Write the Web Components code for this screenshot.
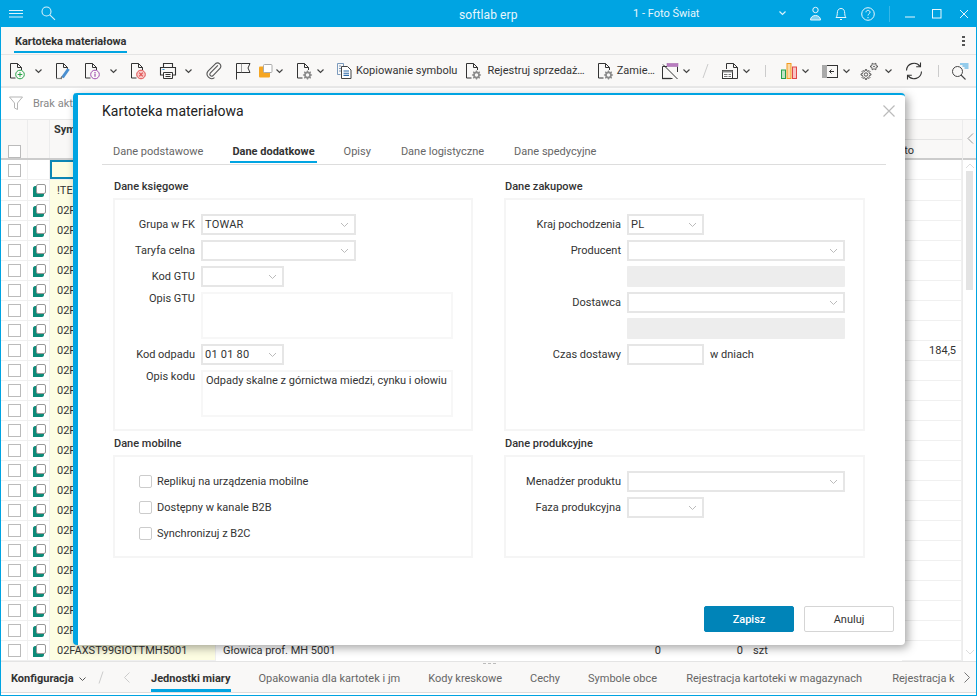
<!DOCTYPE html>
<html lang="pl">
<head>
<meta charset="utf-8">
<title>softlab erp</title>
<style>
  html, body { margin: 0; height: 100%; overflow: hidden; }
  body { font: 11px Roboto, "Liberation Sans", sans-serif; color: #333; }
</style>
</head>
<body>
<erp-app>
  <title-bar slot="title"></title-bar>
  <doc-tabs slot="tabs"></doc-tabs>
  <tool-bar slot="tools"></tool-bar>
  <filter-row slot="filter"></filter-row>
  <data-grid slot="grid"></data-grid>
  <bottom-tabs slot="bottom"></bottom-tabs>
  <material-dialog slot="dialog">
    <form-section slot="left" title="Dane księgowe" height="233" label="80">
      <form-field label="Grupa w FK"><combo-box width="155" value="TOWAR"></combo-box></form-field>
      <form-field label="Taryfa celna"><combo-box width="155"></combo-box></form-field>
      <form-field label="Kod GTU"><combo-box width="83"></combo-box></form-field>
      <form-field label="Opis GTU" top><memo-box height="47"></memo-box></form-field>
      <form-field label="Kod odpadu"><combo-box width="83" value="01 01 80"></combo-box></form-field>
      <form-field label="Opis kodu" top><memo-box height="47">Odpady skalne z górnictwa miedzi, cynku i ołowiu</memo-box></form-field>
    </form-section>
    <form-section slot="left" title="Dane mobilne" height="103" label="80">
      <check-field>Replikuj na urządzenia mobilne</check-field>
      <check-field>Dostępny w kanale B2B</check-field>
      <check-field>Synchronizuj z B2C</check-field>
    </form-section>
    <form-section slot="right" title="Dane zakupowe" height="233" label="115">
      <form-field label="Kraj pochodzenia"><combo-box width="77" value="PL"></combo-box></form-field>
      <form-field label="Producent"><combo-box width="218"></combo-box></form-field>
      <form-field label=""><grey-box></grey-box></form-field>
      <form-field label="Dostawca"><combo-box width="218"></combo-box></form-field>
      <form-field label=""><grey-box></grey-box></form-field>
      <form-field label="Czas dostawy"><combo-box width="77" plain></combo-box><span style="margin-left:6px">w dniach</span></form-field>
    </form-section>
    <form-section slot="right" title="Dane produkcyjne" height="103" label="115">
      <form-field label="Menadżer produktu"><combo-box width="218"></combo-box></form-field>
      <form-field label="Faza produkcyjna"><combo-box width="77"></combo-box></form-field>
    </form-section>
  </material-dialog>
</erp-app>

<script>
  const chev = (color = "#555", w = 9) =>
    `<svg width="${w}" height="6" viewBox="0 0 9 6"><path d="M1.500 1.500l3 3 3-3" fill="none" stroke="${color}" stroke-width="1.200"/></svg>`;

  // outline of a cog wheel, used by the gear icons
  const cog = (cx, cy, R, r, teeth) => {
    const pts = [];
    for (let i = 0; i < teeth; i++) {
      const step = (Math.PI * 2) / teeth;
      const a = i * step;
      [[r, -0.30], [R, -0.16], [R, 0.16], [r, 0.30]].forEach(([rad, off]) => {
        const t = a + off * step;
        pts.push((cx + rad * Math.cos(t)).toFixed(2) + " " + (cy + rad * Math.sin(t)).toFixed(2));
      });
    }
    return "M" + pts.join("L") + "z";
  };

  // toolbar icons, all on a 18x18 box
  const doc = `<path d="M1.500 16V1.500h7l4 4v2.500M8.500 1.500v4h4M1.500 16h5" fill="none" stroke="#333"/>`;
  const docGear = `<path d="M1.500 16V1.500h7l4 4v2.500M8.500 1.500v4h4M1.500 16h5" fill="none" stroke="#333"/><path d="${cog(11.5, 13, 4.6, 3.5, 8)}" fill="#8a8a8a"/><circle cx="11.500" cy="13" r="1.700" fill="#f9f8f7"/>`;
  const ICONS = {
    add: doc + `<circle cx="11" cy="12.500" r="4.300" fill="#f9f8f7" stroke="#2aa54a"/><path d="M8.700 12.500h4.600M11 10.200v4.600" stroke="#2aa54a"/>`,
    edit: `<path d="M1.500 16V1.500h7l4 4v2M8.500 1.500v4h4" fill="none" stroke="#333"/><path d="M1 16.500h6" stroke="#888" stroke-width="1.200"/><path d="M7.500 15.500l6-8.500" stroke="#4a8fd0" stroke-width="3"/><path d="M5.800 17l1.200-2.500" stroke="#777" stroke-width="1.500"/>`,
    info: doc + `<circle cx="11" cy="12.500" r="4.300" fill="#f9f8f7" stroke="#a050b0"/><path d="M11 11.500v3.300M11 9.900v1" stroke="#a050b0" stroke-width="1.200"/>`,
    del: doc + `<circle cx="11" cy="12.500" r="4.300" fill="#f8c8c8" stroke="#e05050"/><path d="M9.200 10.700l3.600 3.600M12.800 10.700l-3.600 3.600" stroke="#e05050" stroke-width="1.100"/>`,
    print: `<path d="M4.500 5V1.500h9V5M4.500 13h-3V5.500h15V13h-3" fill="none" stroke="#333" stroke-width="1.100"/><path d="M4.500 10.500h9v6h-9zM6.500 12.500h5M6.500 14.500h5" fill="none" stroke="#333"/><path d="M3.500 7.500h2" stroke="#2f8fd0"/>`,
    clip: `<path d="M13.500 4.500L5.200 13a2 2 0 0 0 2.800 2.800l8-8.300a3.600 3.600 0 0 0-5-5L2.800 10.800a5 5 0 0 0 7 7" transform="scale(.92) translate(.5 -.8)" fill="none" stroke="#555" stroke-width="1.200"/>`,
    flag: `<path d="M1.500 17.500V1.500h13.500l-2 4.500 2 4.500H1.500" fill="none" stroke="#333"/><path d="M6.500 1.500v9" stroke="#777" stroke-width=".7"/>`,
    square: `<rect x="1" y="4.500" width="11" height="11" rx="1" fill="#f5a623"/><rect x="5.500" y="2.500" width="8.500" height="8" rx="1" fill="#fff" stroke="#aaa"/>`,
    docgear: docGear,
    copy: `<path d="M1.500 1.500h6v3M1.500 1.500v11h3M3 4h2M3 6.500h2M3 9h2" fill="none" stroke="#6d90b5" stroke-width=".9"/><path d="M5.500 4.500h6l3.500 3.500v8.500H5.500z" fill="#fff" stroke="#444"/><path d="M7.500 9h5.500M7.500 11.200h5.500M7.500 13.400h5.500" stroke="#2c6aa8" stroke-width="1.100"/>`,
    tag: `<path d="M1.500 4.500v12h10M16.500 10v-5.500" fill="none" stroke="#333"/><path d="M1.500 4.500H6" stroke="#333"/><rect x="6" y="1.500" width="11" height="3" fill="#b87cc0" stroke="#a060a8" stroke-width=".5"/><path d="M2 2.500l14.500 14.500" stroke="#333"/><path d="M1 16.500h9" stroke="#333" stroke-width="1.300"/>`,
    slash: `<path d="M5 16L10 2" stroke="#ccc"/>`,
    doctable: `<path d="M5.500 7V1.500h7l4 4v11h-5M12.500 1.500v4h4" fill="none" stroke="#333"/><rect x="1.500" y="8.500" width="10" height="8" fill="#fff" stroke="#333"/><rect x="1.500" y="8.500" width="10" height="2" fill="#888"/><path d="M3 12.500h3.500M7.500 12.500h2.500M3 14.500h3.500M7.500 14.500h2.500" stroke="#666" stroke-width=".9"/>`,
    bars: `<rect x="1.500" y="8" width="4" height="8.500" fill="#bfe3c5" stroke="#25a04a"/><rect x="7" y="1.500" width="4" height="15" fill="#fbd9a5" stroke="#f39a1e"/><rect x="12.500" y="5" width="4" height="11.500" fill="#f8c4c4" stroke="#e04848"/>`,
    panel: `<rect x="1.500" y="3.500" width="15" height="12" fill="none" stroke="#333"/><rect x="1" y="3" width="5" height="13" fill="#aaa"/><path d="M13 9.500H8.500M10.500 7.500l-2 2 2 2" fill="none" stroke="#333"/>`,
    gears: `<path d="${cog(6, 12.5, 5, 3.6, 8)}" fill="none" stroke="#444" stroke-width=".9"/><circle cx="6" cy="12.500" r="1.700" fill="none" stroke="#444" stroke-width=".9"/><path d="${cog(14, 4.5, 3.5, 2.4, 6)}" fill="none" stroke="#444" stroke-width=".9"/><circle cx="14" cy="4.500" r=".8" fill="#444"/>`,
    refresh: `<path d="M1.500 8.500a7.500 7.500 0 0 1 13.500-4.200M16.500 9.500a7.500 7.500 0 0 1-13.500 4.200" fill="none" stroke="#333" stroke-width="1.100"/><path d="M15.500 .5v4.300h-4.300M2.500 17.500v-4.300h4.300" fill="none" stroke="#333" stroke-width="1.100"/>`,
    find: `<circle cx="5.500" cy="9.500" r="5" fill="none" stroke="#444"/><path d="M9 13l4.500 4.500" stroke="#444" stroke-width="1.100"/><path d="M8 2h8.500M10.500 4h6M12.500 6h4" stroke="#2f9fe0"/>`
  };

  class ErpApp extends HTMLElement {
    constructor() {
      super();
      this.attachShadow({ mode: "open" }).innerHTML = `
      <style>
        :host { display: flex; flex-direction: column; position: relative; box-sizing: border-box;
          width: 977px; height: 696px; background: #fff; border: solid #00a4e2; border-width: 0 1px 1px; overflow: hidden; }
        ::slotted([slot="grid"]) { flex: 1; min-height: 0; }
      </style>
      <slot name="title"></slot>
      <slot name="tabs"></slot>
      <slot name="tools"></slot>
      <slot name="filter"></slot>
      <slot name="grid"></slot>
      <slot name="bottom"></slot>
      <slot name="dialog"></slot>`;
    }
  }

  class TitleBar extends HTMLElement {
    constructor() {
      super();
      this.attachShadow({ mode: "open" }).innerHTML = `
      <style>
        :host { display: grid; grid-template-columns: 35px 32px 1fr; height: 27px; margin: 0 -1px; background: #00a4e2; color: #fff; align-items: center; position: relative; }
        .name { position: absolute; left: 459px; top: 8px; font-size: 12px; color: #e8f6fc; letter-spacing: .1px; }
        .right { display: flex; align-items: center; height: 27px; }
        .firm { margin-left: 566px; font-size: 11px; width: 145px; margin-top: -1px; color: #e8f6fc; }
        svg { display: block; flex: none; }
      </style>
      <svg style="margin-left:9px" width="15" height="10" viewBox="0 0 15 10"><path d="M0 1.500h14M0 4.500h14M0 8h14" stroke="#dff3fb"/></svg>
      <svg style="margin-left:6px;margin-top:-1px" width="15" height="15" viewBox="0 0 15 15"><circle cx="5.500" cy="5.500" r="4.500" fill="none" stroke="#d5f0fa" stroke-width="1.100"/><path d="M8.800 8.800l5.200 5" stroke="#d5f0fa" stroke-width="1.100"/></svg>
      <span class="name">softlab erp</span>
      <div class="right">
        <span class="firm">1 - Foto Świat</span>
        <span style="width:26px;margin-top:-1px;flex:none">${chev("#d8f1fb")}</span>
        <svg width="13" height="15" viewBox="0 0 13 15" style="margin-left:5px"><circle cx="6.500" cy="4" r="2.700" fill="none" stroke="#e8f6fc"/><path d="M1.500 14c0-6 10-6 10 0z" fill="#7fd0f0" stroke="#e8f6fc"/></svg>
        <svg width="12" height="15" viewBox="0 0 12 15" style="margin-left:13px"><path d="M1 11.500c1.500-1.500 1-3 1.500-6 .5-4 6.500-4 7 0 .5 3 0 4.500 1.500 6z" fill="none" stroke="#e8f6fc"/><path d="M5 13.500h2" stroke="#e8f6fc"/></svg>
        <svg width="14" height="14" viewBox="0 0 14 14" style="margin-left:14px"><circle cx="7" cy="7" r="6.300" fill="none" stroke="#e8f6fc"/><path d="M5 5.300c0-2.600 4-2.600 4 0 0 1.500-2 1.500-2 3.200M7 10v1.200" fill="none" stroke="#e8f6fc"/></svg>
        <span style="width:1px;height:16px;background:#35b7e8;margin-left:14px;flex:none"></span>
        <svg width="10" height="2" viewBox="0 0 10 2" style="margin-left:15px;margin-top:7px"><path d="M0 1h10" stroke="#e8f6fc"/></svg>
        <svg width="10" height="10" viewBox="0 0 10 10" style="margin-left:17px"><rect x=".5" y=".5" width="8.500" height="8.500" fill="none" stroke="#e8f6fc"/></svg>
        <svg width="10" height="10" viewBox="0 0 10 10" style="margin-left:17px"><path d="M1 1l8 8M9 1l-8 8" stroke="#e8f6fc"/></svg>
      </div>`;
    }
  }

  class DocTabs extends HTMLElement {
    constructor() {
      super();
      this.attachShadow({ mode: "open" }).innerHTML = `
      <style>
        :host { display: flex; justify-content: space-between; height: 28px; box-sizing: border-box; background: #f9f8f7; border-bottom: 1px solid #e4e4e4; padding-left: 13px; }
        .tab { font-size: 11px; font-weight: 700; color: #333; padding: 8px 1px 0 1px; height: 16px; border-bottom: 2px solid #00a4e2; line-height: 13px; letter-spacing: -.005em; }
        .dots { width: 3px; margin: 9px 11px 0 0; display: grid; gap: 2px; grid-auto-rows: 2px; }
        .dots i { background: #555; }
      </style>
      <div class="tab">Kartoteka materiałowa</div>
      <div class="dots"><i></i><i></i><i></i></div>`;
    }
  }

  // one toolbar entry: icon, optional caption, optional chevron
  class ToolButton extends HTMLElement {
    constructor() {
      super();
      this.attachShadow({ mode: "open" });
    }
    connectedCallback() {
      const icon = this.getAttribute("icon");
      const gap = this.getAttribute("gap") || 7;
      const capGap = this.getAttribute("cap") || 2;
      this.shadowRoot.innerHTML = `
      <style>
        :host { display: flex; align-items: center; height: 18px; color: #333; font-size: 11px; white-space: nowrap; }
        svg { display: block; flex: none; }
        .cap { margin-left: ${capGap}px; }
        .more { margin-left: ${gap}px; display: block; line-height: 0; }
      </style>
      <svg width="18" height="18" viewBox="0 0 18 18">${ICONS[icon]}</svg>
      ${this.textContent.trim() ? `<span class="cap"><slot></slot></span>` : ""}
      ${this.hasAttribute("more") ? `<span class="more">${chev("#444")}</span>` : ""}`;
    }
  }

  class ToolBar extends HTMLElement {
    constructor() {
      super();
      this.attachShadow({ mode: "open" }).innerHTML = `
      <style>
        :host { display: flex; align-items: center; height: 33px; box-sizing: border-box; background: #f9f8f7; border-bottom: 2px solid #e8e8e8; padding-left: 8px; }
        tool-button { flex: none; }
        .sep { width: 1px; height: 12px; background: #ccc; flex: none; }
      </style>
      <tool-button icon="add" more></tool-button>
      <tool-button icon="edit" style="margin-left:12px"></tool-button>
      <tool-button icon="info" more style="margin-left:11px"></tool-button>
      <tool-button icon="del" style="margin-left:12px"></tool-button>
      <tool-button icon="print" more style="margin-left:11px"></tool-button>
      <tool-button icon="clip" style="margin-left:12px"></tool-button>
      <tool-button icon="flag" style="margin-left:12px"></tool-button>
      <tool-button icon="square" more gap="-1" style="margin-left:5px"></tool-button>
      <tool-button icon="docgear" more gap="2" style="margin-left:12px"></tool-button>
      <tool-button icon="copy" style="margin-left:11px">Kopiowanie symbolu</tool-button>
      <tool-button icon="docgear" cap="4" style="margin-left:8px">Rejestruj sprzedaż…</tool-button>
      <tool-button icon="docgear" style="margin-left:12px">Zamie…</tool-button>
      <tool-button icon="tag" more gap="3" style="margin-left:6px"></tool-button>
      <tool-button icon="slash" style="margin-left:7px"></tool-button>
      <tool-button icon="doctable" more gap="3" style="margin-left:5px"></tool-button>
      <span class="sep" style="margin-left:14px"></span>
      <tool-button icon="bars" more gap="3" style="margin-left:14px"></tool-button>
      <tool-button icon="panel" more gap="3" style="margin-left:11px"></tool-button>
      <tool-button icon="gears" more gap="6" style="margin-left:9px"></tool-button>
      <tool-button icon="refresh" style="margin-left:12px"></tool-button>
      <span class="sep" style="margin-left:15px"></span>
      <tool-button icon="find" style="margin-left:13px"></tool-button>`;
    }
  }

  class FilterRow extends HTMLElement {
    constructor() {
      super();
      this.attachShadow({ mode: "open" }).innerHTML = `
      <style>
        :host { display: flex; align-items: center; height: 31px; box-sizing: border-box; padding-left: 8px; background: #fff; color: #888; font-size: 11px; }
        svg { margin-right: 10px; }
      </style>
      <svg width="14" height="15" viewBox="0 0 14 15"><path d="M.5 1h13L8.500 7v6.500l-3-1.500V7z" fill="none" stroke="#b5b5b5"/></svg>
      <span>Brak aktywnych</span>`;
    }
  }

  class DataGrid extends HTMLElement {
    constructor() {
      super();
      this.attachShadow({ mode: "open" });
    }
    connectedCallback() {
      const rowIcon = `<svg width="13" height="13" viewBox="0 0 13 13"><path d="M0 4c0-1 1-2 2-2h9v9c0 1-1 2-2 2H0z" fill="#0d8a78"/><rect x="3.500" y=".5" width="9" height="9" rx="1.500" fill="#fff" stroke="#999"/></svg>`;
      let rows = `<div class="row first"><span class="cell chk"><i class="box"></i></span><span class="cell ico"></span><span class="cell sym sel"></span><span class="cell rest"></span><span class="cell end"></span></div>`;
      for (let i = 1; i < 24; i++) {
        const sym = i === 1 ? "!TE" : "02F";
        const val = i === 9 ? "184,5" : "";
        rows += `<div class="row"><span class="cell chk"><i class="box"></i></span><span class="cell ico">${rowIcon}</span><span class="cell sym">${sym}</span><span class="cell rest"></span><span class="cell end">${val}</span></div>`;
      }
      rows += `<div class="row"><span class="cell chk"><i class="box"></i></span><span class="cell ico">${rowIcon}</span><span class="cell sym">02FAXST99GIOTTMH5001</span><span class="cell rest last"><b>Głowica prof. MH 5001</b><b class="n1">0</b><b class="n2">0</b><b class="n3">szt</b></span><span class="cell end"></span></div>`;
      this.shadowRoot.innerHTML = `
      <style>
        :host { display: grid; grid-template-columns: 1fr 14px; background: #fff; color: #333; font-size: 11px; overflow: hidden; border-top: 1px solid #e8e8e8; }
        .table { min-width: 0; display: flex; flex-direction: column; overflow: hidden; }
        .head { display: grid; grid-template-columns: 27px 22px 166px 1fr; height: 40px; box-sizing: border-box; background: #f9f8f7; border-bottom: 2px solid #ccc; flex: none; }
        .head span { border-right: 1px solid #ececec; box-sizing: border-box; }
        .head .box { margin: 25px 0 0 7px; }
        .head .title { font-weight: 700; padding: 3px 0 0 4px; line-height: 13px; }
        .head .far { display: grid; grid-template-rows: 19px 19px; border: 0; }
        .head .far em { font-style: normal; text-align: right; padding: 4px 48px 0 0; grid-row: 2; border-top: 1px solid #e4e4e4; line-height: 13px; }
        .row { display: grid; grid-template-columns: 27px 22px 166px 1fr 60px; height: 20px; flex: none; }
        .cell { box-sizing: border-box; border-right: 1px solid #f0f0f0; border-bottom: 1px solid #f0f0f0; line-height: 19px; padding-top: 1px; white-space: nowrap; }
        .box { display: block; box-sizing: border-box; width: 13px; height: 13px; border: 1px solid #bbb; background: #fff; }
        .chk { padding-top: 0; }
        .chk .box { margin: 4px 0 0 7px; }
        .ico { padding: 4px 0 0 5px; }
        .ico svg { display: block; }
        .sym { background: #fdfde2; padding-left: 7px; color: #333; }
        .sel { box-shadow: inset 0 0 0 2px #0c86b4; }
        .end { text-align: right; padding-right: 5px; }
        .rest { border-right: 0; }
        .last { display: grid; grid-template-columns: 421px 17px 82px 30px 1fr; padding-left: 7px; border-bottom: 0; }
        .last b { font-weight: 400; }
        .last .n1 { grid-column: 2; text-align: right; }
        .last .n2 { grid-column: 3; text-align: right; }
        .last .n3 { grid-column: 4; padding-left: 10px; }
        .side { display: flex; flex-direction: column; background: #fff; border-left: 1px solid #ececec; }
        .cap { height: 40px; flex: none; box-sizing: border-box; background: #f9f8f7; display: flex; align-items: flex-end; padding: 0 0 14px 4px; border-bottom: 2px solid #ccc; }
        .up { height: 11px; display: flex; justify-content: center; align-items: center; }
        .thumb { margin: 0 3px 0 3px; height: 119px; background: #e4e4e4; flex: none; }
        .down { margin-top: auto; height: 12px; display: flex; justify-content: center; }
      </style>
      <div class="table">
        <div class="head">
          <span><i class="box"></i></span>
          <span></span>
          <span class="title">Sym</span>
          <span class="far"><em>to</em></span>
        </div>
        ${rows}
      </div>
      <div class="side">
        <div class="cap"><svg width="7" height="11" viewBox="0 0 7 11"><path d="M6 .5L1 5.500l5 5" fill="none" stroke="#999"/></svg></div>
        <div class="up"><svg width="10" height="6" viewBox="0 0 10 6"><path d="M1 5l4-4 4 4" fill="none" stroke="#ddd"/></svg></div>
        <div class="thumb"></div>
        <div class="down"><svg width="10" height="6" viewBox="0 0 10 6"><path d="M1 1l4 4 4-4" fill="none" stroke="#ddd"/></svg></div>
      </div>`;
    }
  }

  class BottomTabs extends HTMLElement {
    constructor() {
      super();
      this.attachShadow({ mode: "open" }).innerHTML = `
      <style>
        :host { display: block; height: 34px; box-sizing: border-box; background: #fff; border-top: 1px solid #e4e4e4; position: relative; }
        .strip { display: flex; align-items: flex-start; height: 31px; box-sizing: border-box; background: #f9f8f7; border-bottom: 1px solid #ddd; color: #666; font-size: 11px; padding-left: 10px; white-space: nowrap; }
        .grip { position: absolute; left: 482px; top: 1px; width: 13px; border-top: 1px dashed #bbb; }
        span { display: block; padding-top: 10px; line-height: 13px; flex: none; }
        .menu { font-weight: 700; color: #333; width: 62px; }
        .on { font-weight: 700; color: #333; padding-top: 10px; border-bottom: 3px solid #00a4e2; height: 17px; }
        svg { flex: none; display: block; }
        .clip { width: 66px; }
      </style>
      <i class="grip"></i>
      <div class="strip">
        <span class="menu">Konfiguracja</span>
        <svg style="margin-left:5px;margin-top:14px" width="9" height="6" viewBox="0 0 9 6"><path d="M1.500 1.500l3 3 3-3" fill="none" stroke="#555"/></svg>
        <svg style="margin-left:11px;margin-top:9px" width="6" height="13" viewBox="0 0 6 13"><path d="M1 12.500L5 .5" stroke="#ccc"/></svg>
        <svg style="margin-left:20px;margin-top:10px" width="6" height="11" viewBox="0 0 6 11"><path d="M5.500 .5l-5 5 5 5" fill="none" stroke="#ccc"/></svg>
        <span class="on" style="margin-left:21px">Jednostki miary</span>
        <span style="margin-left:28px">Opakowania dla kartotek i jm</span>
        <span style="margin-left:28px">Kody kreskowe</span>
        <span style="margin-left:28px">Cechy</span>
        <span style="margin-left:28px">Symbole obce</span>
        <span style="margin-left:29px">Rejestracja kartoteki w magazynach</span>
        <span class="clip" style="margin-left:30px">Rejestracja k</span>
        <svg style="margin-left:6px;margin-top:10px" width="6" height="11" viewBox="0 0 6 11"><path d="M.5 .5l5 5-5 5" fill="none" stroke="#777"/></svg>
      </div>`;
    }
  }

  class MaterialDialog extends HTMLElement {
    constructor() {
      super();
      this.attachShadow({ mode: "open" }).innerHTML = `
      <style>
        :host { position: absolute; left: 72px; top: 93px; width: 832px; height: 552px; box-sizing: border-box; background: #fff;
          border-left: 5px solid #00a4e2; border-top: 2px solid #00a4e2; border-radius: 4px;
          box-shadow: 3px 3px 10px rgba(0,0,0,.35); padding: 0 11px 0 24px; display: flex; flex-direction: column; color: #333; font-size: 11px; }
        h1 { margin: 8px 0 0; font-size: 14px; font-weight: 400; color: #222; line-height: 16px; }
        .close { position: absolute; right: 10px; top: 10px; display: block; }
        nav { display: flex; margin-top: 18px; height: 28px; box-sizing: border-box; border-bottom: 1px solid #ddd; margin-right: 8px; padding-left: 9px; color: #666; }
        nav span { padding: 8px 2px 0; height: 17px; line-height: 13px; margin-right: 25px; }
        nav .on { font-weight: 700; color: #333; border-bottom: 2px solid #00a4e2; padding-top: 8px; height: 16px; }
        nav .wide { margin-right: 26px; }
        .cols { display: grid; grid-template-columns: 360px 361px; column-gap: 31px; margin-top: 15px; margin-left: 11px; }
        .col { display: flex; flex-direction: column; row-gap: 6px; }
        footer { margin-top: auto; display: flex; justify-content: flex-end; gap: 10px; padding-bottom: 13px; }
        button { width: 90px; height: 26px; font: 11px Roboto, "Liberation Sans", sans-serif; border-radius: 2px; box-sizing: border-box; }
        .ok { background: #0084b8; border: 1px solid #0084b8; color: #fff; font-weight: 500; }
        .no { background: #fff; border: 1px solid #d5d5d5; color: #333; }
      </style>
      <h1>Kartoteka materiałowa</h1>
      <svg class="close" width="12" height="12" viewBox="0 0 12 12"><path d="M.5 .5l11 11M11.500 .5l-11 11" stroke="#bbb" stroke-width="1.200"/></svg>
      <nav>
        <span>Dane podstawowe</span>
        <span class="on">Dane dodatkowe</span>
        <span class="wide">Opisy</span>
        <span class="wide">Dane logistyczne</span>
        <span>Dane spedycyjne</span>
      </nav>
      <div class="cols">
        <div class="col"><slot name="left"></slot></div>
        <div class="col"><slot name="right"></slot></div>
      </div>
      <footer><button class="ok">Zapisz</button><button class="no">Anuluj</button></footer>`;
    }
  }

  class FormSection extends HTMLElement {
    constructor() {
      super();
      this.attachShadow({ mode: "open" });
    }
    connectedCallback() {
      this.style.setProperty("--label", this.getAttribute("label") + "px");
      this.shadowRoot.innerHTML = `
      <style>
        :host { display: block; }
        h2 { margin: 0 0 5px; padding-left: 1px; font-size: 11px; font-weight: 500; color: #333; line-height: 13px; }
        .box { box-sizing: border-box; height: ${this.getAttribute("height")}px; border: 2px solid #f5f5f5; padding: 14px 0 0 0; display: flex; flex-direction: column; row-gap: 5px; }
      </style>
      <h2>${this.getAttribute("title")}</h2>
      <div class="box"><slot></slot></div>`;
    }
  }

  class FormField extends HTMLElement {
    constructor() {
      super();
      this.attachShadow({ mode: "open" });
    }
    connectedCallback() {
      this.shadowRoot.innerHTML = `
      <style>
        :host { display: grid; grid-template-columns: var(--label) 1fr; column-gap: 6px; align-items: ${this.hasAttribute("top") ? "start" : "center"}; color: #333; }
        label { text-align: right; line-height: 13px; white-space: nowrap; }
        .ctl { display: flex; align-items: center; }
      </style>
      <label>${this.getAttribute("label")}</label>
      <div class="ctl"><slot></slot></div>`;
    }
  }

  class ComboBox extends HTMLElement {
    constructor() {
      super();
      this.attachShadow({ mode: "open" });
    }
    connectedCallback() {
      const plain = this.hasAttribute("plain");
      this.shadowRoot.innerHTML = `
      <style>
        :host { display: flex; align-items: center; justify-content: space-between; box-sizing: border-box; width: ${this.getAttribute("width")}px; height: 21px; border: 2px solid #e6e6e6; background: #fff; padding: 0 5px 0 2px; color: #333; font-size: 11px; letter-spacing: .02em; }
        svg { display: block; }
      </style>
      <span>${this.getAttribute("value") || ""}</span>
      ${plain ? "" : `<svg width="9" height="6" viewBox="0 0 9 6"><path d="M1 1l3.500 3.500L8 1" fill="none" stroke="#bbb"/></svg>`}`;
    }
  }

  class MemoBox extends HTMLElement {
    constructor() {
      super();
      this.attachShadow({ mode: "open" });
    }
    connectedCallback() {
      this.shadowRoot.innerHTML = `
      <style>
        :host { display: block; box-sizing: border-box; width: 252px; height: ${this.getAttribute("height")}px; border: 2px solid #f7f7f7; padding: 2px 0 0 3px; line-height: 13px; white-space: nowrap; color: #333; }
      </style>
      <slot></slot>`;
    }
  }

  class GreyBox extends HTMLElement {
    constructor() {
      super();
      this.attachShadow({ mode: "open" }).innerHTML = `<style>:host { display: block; width: 218px; height: 21px; background: #ededed; border-radius: 1px; }</style>`;
    }
  }

  class CheckField extends HTMLElement {
    constructor() {
      super();
      this.attachShadow({ mode: "open" }).innerHTML = `
      <style>
        :host { display: flex; align-items: center; height: 21px; padding-left: 24px; color: #333; line-height: 13px; }
        i { width: 13px; height: 13px; border: 1px solid #ccc; border-radius: 2px; box-sizing: border-box; margin-right: 5px; background: #fff; }
      </style>
      <i></i><slot></slot>`;
    }
  }

  customElements.define("erp-app", ErpApp);
  customElements.define("title-bar", TitleBar);
  customElements.define("doc-tabs", DocTabs);
  customElements.define("tool-button", ToolButton);
  customElements.define("tool-bar", ToolBar);
  customElements.define("filter-row", FilterRow);
  customElements.define("data-grid", DataGrid);
  customElements.define("bottom-tabs", BottomTabs);
  customElements.define("material-dialog", MaterialDialog);
  customElements.define("form-section", FormSection);
  customElements.define("form-field", FormField);
  customElements.define("combo-box", ComboBox);
  customElements.define("memo-box", MemoBox);
  customElements.define("grey-box", GreyBox);
  customElements.define("check-field", CheckField);
</script>
</body>
</html>
